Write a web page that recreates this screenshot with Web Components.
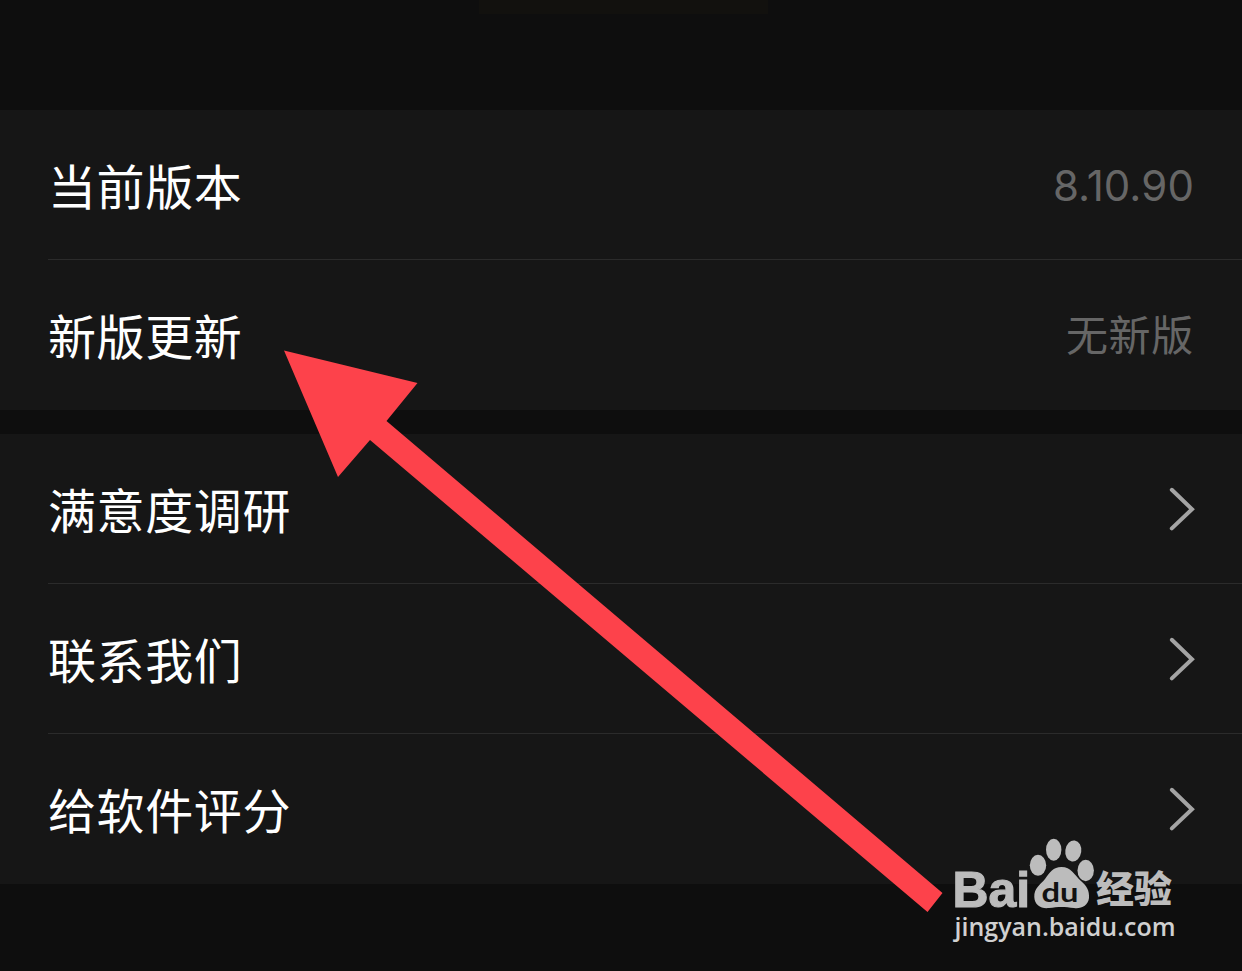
<!DOCTYPE html>
<html lang="zh-CN">
<head>
<meta charset="utf-8">
<title>设置</title>
<style>
html, body {
	margin: 0px;
	height: 100%;
	overflow: hidden;
	background: #0e0e0e;
}
</style>
</head>
<body>
<about-page>
	<cell-group>
		<cell-row value="8.10.90">当前版本</cell-row>
		<cell-row value="无新版">新版更新</cell-row>
	</cell-group>
	<cell-group>
		<cell-row link>满意度调研</cell-row>
		<cell-row link>联系我们</cell-row>
		<cell-row link>给软件评分</cell-row>
	</cell-group>
	<pointer-arrow slot="overlay"></pointer-arrow>
	<site-mark slot="overlay"></site-mark>
</about-page>

<script>
function define(name, html, setup) {
	const template = document.createElement('template')
	template.innerHTML = html

	window.customElements.define(name, class extends HTMLElement {
		constructor() {
			super()
			this.attachShadow({ mode: 'open' })
			this.shadowRoot.appendChild(template.content.cloneNode(true))
		}

		connectedCallback() {
			if (setup) { setup(this, this.shadowRoot) }
		}
	})
}

define('about-page', `
<style>
:host {
	display: block;
	position: relative;
	width: 1242px;
	height: 971px;
	overflow: hidden;
	background: #0e0e0e;
	font-family: Inter, "Noto Sans CJK SC", sans-serif;
}
header {
	height: 110px;
}
/* lower edge of the app logo, scrolled almost out of view */
header::before {
	content: "";
	display: block;
	width: 289px;
	height: 14px;
	margin-left: 479px;
	background: #12110e;
	float: left;
}
main {
	display: flex;
	flex-direction: column;
	gap: 24px;
}
</style>
<header></header>
<main><slot></slot></main>
<slot name="overlay"></slot>
`)

define('cell-group', `
<style>
:host {
	display: flex;
	flex-direction: column;
	background: #161616;
}
::slotted(:last-child) { --line: transparent; }
</style>
<slot></slot>
`)

define('cell-row', `
<style>
:host {
	display: block;
	padding-left: 48px;
}
#row {
	display: flex;
	align-items: center;
	justify-content: space-between;
	box-sizing: border-box;
	height: 150px;
	padding-right: 48px;
	border-bottom: 1px solid var(--line, #2b2b2b);
}
#label {
	color: #fff;
	font-size: 48px;
	line-height: 60px;
	letter-spacing: 0.6px;
	padding-top: 7px;
}
#value {
	color: #666;
	font-size: 42px;
	line-height: 60px;
	letter-spacing: 0.7px;
	padding-top: 3px;
}
/* digits run tighter than the Chinese value */
#value.number { letter-spacing: 0.1px; }
svg {
	display: none;
	width: 30px;
	height: 48px;
	margin-right: -4px;
}
:host([link]) svg { display: block; }
:host([link]) #value { display: none; }
</style>
<div id="row">
	<span id="label"><slot></slot></span>
	<span id="value"></span>
	<svg viewBox="0 0 30 48"><path d="M3.800 4.800 L24 24.200 L3.800 43.400" fill="none" stroke="#a4a4a4" stroke-width="4" stroke-linecap="round"/></svg>
</div>
`, (host, root) => {
	const value = host.getAttribute('value') || ''
	root.getElementById('value').textContent = value
	root.getElementById('value').classList.toggle('number', /^[\d.]+$/.test(value))
})

define('pointer-arrow', `
<style>
:host {
	position: absolute;
	left: 284px;
	top: 350px;
	width: 660px;
	height: 563px;
}
svg { display: block; }
</style>
<svg width="660" height="563"><path d="M0 0.5 L133.5 33 L102.5 71 L658.5 543 L643.5 562 L86 90 L54 127 Z" fill="#fd424b"/></svg>
`)

define('site-mark', `
<style>
:host {
	position: absolute;
	left: 940px;
	top: 830px;
	width: 250px;
	height: 120px;
}
svg { display: block; }
.latin { font-family: "Liberation Sans", sans-serif; font-weight: bold; }
.paw { font-family: Lato, sans-serif; font-weight: bold; fill: #111; }
.cjk { font-family: "Noto Sans CJK SC", sans-serif; font-weight: 900; }
.url { font-family: "Open Sans", sans-serif; font-weight: 600; }
</style>
<svg width="250" height="120" fill="#bcbcbc">
	<text class="latin" x="12.500" y="76.500" font-size="50" textLength="77.500" lengthAdjust="spacingAndGlyphs" stroke="#bcbcbc" stroke-width="1.200">Bai</text>
	<ellipse cx="98" cy="35.3" rx="8.2" ry="10.5"/>
	<ellipse cx="113.7" cy="19.8" rx="7.7" ry="11"/>
	<ellipse cx="133.3" cy="21" rx="8" ry="10.6" transform="rotate(8 133.3 21)"/>
	<ellipse cx="145.7" cy="40.5" rx="8.2" ry="10.7"/>
	<path d="M121.500 37 C131 37 134.500 45 141 51 C147 56 149.500 61 149 68 C148 76 141 79 134 78 C125 76.500 118 76.500 109 78 C101 79 94.500 75 94.300 67 C94 58 100 55 105 49 C110 42 113 37 121.500 37 Z"/>
	<text class="paw" x="101.500" y="71.500" font-size="26" textLength="37" lengthAdjust="spacingAndGlyphs">du</text>
	<text class="cjk" x="156" y="73" font-size="37" textLength="76" lengthAdjust="spacingAndGlyphs">经验</text>
	<text class="url" x="14.500" y="106" font-size="25.500" textLength="221" lengthAdjust="spacingAndGlyphs" fill="#d0d0d0">jingyan.baidu.com</text>
</svg>
`)
</script>
</body>
</html>
